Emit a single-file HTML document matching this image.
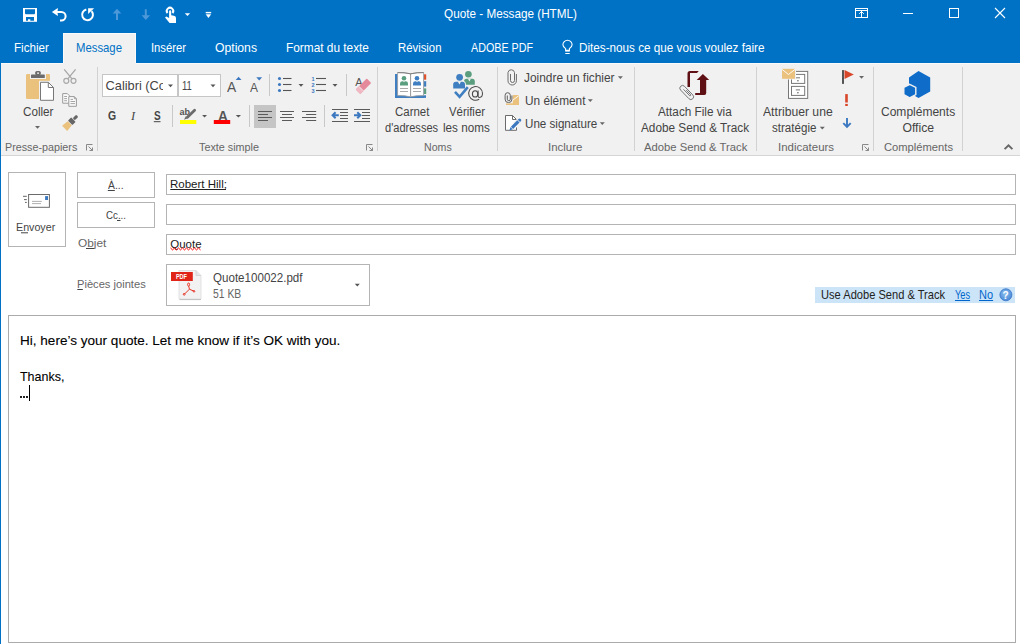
<!DOCTYPE html>
<html><head><meta charset="utf-8"><style>
html,body{margin:0;padding:0}
body{width:1020px;height:644px;position:relative;overflow:hidden;background:#fff;font-family:"Liberation Sans",sans-serif}
.t{position:absolute;white-space:nowrap;line-height:1;transform-origin:0 0}
</style></head><body>
<div style="position:absolute;left:0px;top:0px;width:1020px;height:63px;background:#0072c6"></div>
<div class="t" style="left:444.40px;top:8.14px;font-size:12.35px;color:#fff;transform:scaleX(0.9504);">Quote - Message (HTML)</div>
<div style="position:absolute;left:63px;top:33px;width:73px;height:31px;background:#f1f1f1;border:1px solid #fafafa;border-bottom:0;box-sizing:border-box"></div>
<div class="t" style="left:14.00px;top:41.97px;font-size:12.79px;color:#fff;transform:scaleX(0.9118);">Fichier</div>
<div class="t" style="left:76.00px;top:41.97px;font-size:12.79px;color:#0072c6;transform:scaleX(0.8862);">Message</div>
<div class="t" style="left:151.00px;top:41.97px;font-size:12.79px;color:#fff;transform:scaleX(0.8793);">Insérer</div>
<div class="t" style="left:215.00px;top:41.97px;font-size:12.79px;color:#fff;transform:scaleX(0.9529);">Options</div>
<div class="t" style="left:286.00px;top:41.97px;font-size:12.79px;color:#fff;transform:scaleX(0.9266);">Format du texte</div>
<div class="t" style="left:398.00px;top:41.97px;font-size:12.79px;color:#fff;transform:scaleX(0.8868);">Révision</div>
<div class="t" style="left:471.00px;top:41.97px;font-size:12.79px;color:#fff;transform:scaleX(0.8388);">ADOBE PDF</div>
<div class="t" style="left:579.40px;top:41.97px;font-size:12.79px;color:#fff;transform:scaleX(0.9160);">Dites-nous ce que vous voulez faire</div>
<div style="position:absolute;left:1px;top:63px;width:1019px;height:92px;background:#f1f1f1"></div>
<div style="position:absolute;left:1px;top:63px;width:62px;height:1px;background:#fafafa"></div>
<div style="position:absolute;left:136px;top:63px;width:884px;height:1px;background:#fafafa"></div>
<div style="position:absolute;left:1px;top:155px;width:1019px;height:1px;background:#d5d5d5"></div>
<div style="position:absolute;left:0px;top:63px;width:1px;height:581px;background:#0072c6"></div>
<div style="position:absolute;left:97px;top:67px;width:1px;height:84px;background:#d2d2d2"></div>
<div style="position:absolute;left:377px;top:67px;width:1px;height:84px;background:#d2d2d2"></div>
<div style="position:absolute;left:497px;top:67px;width:1px;height:84px;background:#d2d2d2"></div>
<div style="position:absolute;left:634px;top:67px;width:1px;height:84px;background:#d2d2d2"></div>
<div style="position:absolute;left:756px;top:67px;width:1px;height:84px;background:#d2d2d2"></div>
<div style="position:absolute;left:873px;top:67px;width:1px;height:84px;background:#d2d2d2"></div>
<div style="position:absolute;left:962px;top:67px;width:1px;height:84px;background:#d2d2d2"></div>
<div class="t" style="left:4.70px;top:141.26px;font-size:11.63px;color:#666666;transform:scaleX(0.9246);">Presse-papiers</div>
<div class="t" style="left:199.30px;top:141.26px;font-size:11.63px;color:#666666;transform:scaleX(0.9284);">Texte simple</div>
<div class="t" style="left:423.70px;top:141.26px;font-size:11.63px;color:#666666;transform:scaleX(0.9124);">Noms</div>
<div class="t" style="left:548.40px;top:141.26px;font-size:11.63px;color:#666666;transform:scaleX(0.9858);">Inclure</div>
<div class="t" style="left:644.00px;top:141.26px;font-size:11.63px;color:#666666;transform:scaleX(0.9684);">Adobe Send &amp; Track</div>
<div class="t" style="left:778.30px;top:141.26px;font-size:11.63px;color:#666666;transform:scaleX(0.9862);">Indicateurs</div>
<div class="t" style="left:883.60px;top:141.26px;font-size:11.63px;color:#666666;transform:scaleX(0.9619);">Compléments</div>
<div class="t" style="left:22.50px;top:106.26px;font-size:12.21px;color:#444444;transform:scaleX(0.9564);">Coller</div>
<div class="t" style="left:394.50px;top:106.06px;font-size:12.21px;color:#444444;transform:scaleX(0.9389);">Carnet</div>
<div class="t" style="left:384.60px;top:122.06px;font-size:12.21px;color:#444444;transform:scaleX(0.9051);">d'adresses</div>
<div class="t" style="left:449.00px;top:106.06px;font-size:12.21px;color:#444444;transform:scaleX(0.9307);">Vérifier</div>
<div class="t" style="left:443.00px;top:122.06px;font-size:12.21px;color:#444444;transform:scaleX(0.9580);">les noms</div>
<div class="t" style="left:658.00px;top:106.06px;font-size:12.21px;color:#444444;transform:scaleX(0.9624);">Attach File via</div>
<div class="t" style="left:641.00px;top:122.06px;font-size:12.21px;color:#444444;transform:scaleX(0.9660);">Adobe Send &amp; Track</div>
<div class="t" style="left:763.30px;top:106.06px;font-size:12.21px;color:#444444;transform:scaleX(0.9970);">Attribuer une</div>
<div class="t" style="left:772.00px;top:122.06px;font-size:12.21px;color:#444444;transform:scaleX(0.9483);">stratégie</div>
<div class="t" style="left:880.60px;top:106.06px;font-size:12.21px;color:#444444;transform:scaleX(0.9851);">Compléments</div>
<div class="t" style="left:902.40px;top:122.06px;font-size:12.21px;color:#444444;">Office</div>
<div class="t" style="left:524.20px;top:72.26px;font-size:12.21px;color:#444444;transform:scaleX(0.9745);">Joindre un fichier</div>
<div class="t" style="left:524.50px;top:95.46px;font-size:12.21px;color:#444444;transform:scaleX(0.9690);">Un élément</div>
<div class="t" style="left:524.50px;top:118.26px;font-size:12.21px;color:#444444;transform:scaleX(0.9511);">Une signature</div>
<div style="position:absolute;left:102px;top:74px;width:76px;height:23px;background:#fff;border:1px solid #c6c6c6;box-sizing:border-box"></div>
<div style="position:absolute;left:178px;top:74px;width:43px;height:23px;background:#fff;border:1px solid #c6c6c6;box-sizing:border-box"></div>
<div style="position:absolute;left:103px;top:75px;width:60px;height:21px;overflow:hidden">
<div class="t" style="left:2.60px;top:5.17px;font-size:12.79px;color:#444;">Calibri (Co</div>
</div>
<div class="t" style="left:181.90px;top:80.17px;font-size:12.79px;color:#444;transform:scaleX(0.7381);">11</div>
<div class="t" style="left:227.30px;top:78.96px;font-size:15.41px;color:#555;transform:scaleX(0.8953);">A</div>
<div class="t" style="left:250.20px;top:81.66px;font-size:12.21px;color:#555;transform:scaleX(0.9824);">A</div>
<div class="t" style="left:108.30px;top:110.22px;font-size:12.50px;color:#444;transform:scaleX(0.8329);font-weight:bold;">G</div>
<div class="t" style="left:153.80px;top:110.22px;font-size:12.50px;color:#444;transform:scaleX(0.8036);font-weight:bold;">S</div>
<div class="t" style="left:218.00px;top:108.72px;font-size:14.39px;color:#555;transform:scaleX(0.9481);font-weight:bold;">A</div>
<div style="position:absolute;left:8px;top:172px;width:58px;height:75px;border:1px solid #b4b4b4;box-sizing:border-box;background:#fff"></div>
<div style="position:absolute;left:77px;top:172px;width:78px;height:26px;border:1px solid #b4b4b4;box-sizing:border-box;background:#fff"></div>
<div style="position:absolute;left:77px;top:202px;width:78px;height:26px;border:1px solid #b4b4b4;box-sizing:border-box;background:#fff"></div>
<div style="position:absolute;left:166px;top:174px;width:850px;height:21px;border:1px solid #b4b4b4;box-sizing:border-box;background:#fff"></div>
<div style="position:absolute;left:166px;top:204px;width:850px;height:21px;border:1px solid #b4b4b4;box-sizing:border-box;background:#fff"></div>
<div style="position:absolute;left:166px;top:234px;width:850px;height:21px;border:1px solid #b4b4b4;box-sizing:border-box;background:#fff"></div>
<div class="t" style="left:15.60px;top:222.43px;font-size:11.19px;color:#444;transform:scaleX(0.9549);">Envoyer</div>
<div class="t" style="left:108.00px;top:180.03px;font-size:11.19px;color:#444;transform:scaleX(0.9233);">À...</div>
<div class="t" style="left:105.50px;top:210.03px;font-size:11.19px;color:#444;transform:scaleX(0.8692);">Cc...</div>
<div class="t" style="left:77.60px;top:238.45px;font-size:11.05px;color:#666;transform:scaleX(1.0719);">Objet</div>
<div class="t" style="left:170.30px;top:179.48px;font-size:11.48px;color:#1a1a1a;transform:scaleX(1.0036);">Robert Hill;</div>
<div class="t" style="left:170.30px;top:239.28px;font-size:11.48px;color:#1a1a1a;">Quote</div>
<div class="t" style="left:76.80px;top:279.45px;font-size:11.05px;color:#666;transform:scaleX(1.0080);">Pièces jointes</div>
<div style="position:absolute;left:166px;top:264px;width:204px;height:42px;border:1px solid #b4b4b4;box-sizing:border-box;background:#fff"></div>
<div class="t" style="left:213.40px;top:272.16px;font-size:12.21px;color:#444;transform:scaleX(0.9493);">Quote100022.pdf</div>
<div class="t" style="left:213.40px;top:288.36px;font-size:12.21px;color:#666;transform:scaleX(0.8509);">51 KB</div>
<div style="position:absolute;left:815px;top:287px;width:200px;height:16px;background:#cce4f7"></div>
<div class="t" style="left:821.40px;top:288.84px;font-size:12.35px;color:#222;transform:scaleX(0.8996);">Use Adobe Send &amp; Track</div>
<div class="t" style="left:954.70px;top:288.84px;font-size:12.35px;color:#0066cc;transform:scaleX(0.7494);text-decoration:underline;">Yes</div>
<div class="t" style="left:979.20px;top:288.84px;font-size:12.35px;color:#0066cc;transform:scaleX(0.8930);text-decoration:underline;">No</div>
<div style="position:absolute;left:8px;top:315px;width:1008px;height:328px;border:1px solid #ababab;box-sizing:border-box;background:#fff"></div>
<div class="t" style="left:19.90px;top:335.07px;font-size:12.79px;color:#000;transform:scaleX(1.0599);-webkit-text-stroke:0.1px #000;">Hi, here’s your quote. Let me know if it’s OK with you.</div>
<div class="t" style="left:19.90px;top:370.87px;font-size:12.79px;color:#000;transform:scaleX(0.9759);-webkit-text-stroke:0.1px #000;">Thanks,</div>
<div style="position:absolute;left:20.2px;top:396.2px;width:1.4px;height:1.5px;background:#222"></div>
<div style="position:absolute;left:23.3px;top:396.2px;width:1.4px;height:1.5px;background:#222"></div>
<div style="position:absolute;left:26.4px;top:396.2px;width:1.4px;height:1.5px;background:#222"></div>
<div style="position:absolute;left:29px;top:385px;width:1px;height:16px;background:#000"></div>
<svg style="position:absolute;left:0;top:0" width="1020" height="644" viewBox="0 0 1020 644"><rect x="23" y="8" width="14" height="13.8" fill="#ffffff"/><path d="M25,9.2 H35 V13.6 L34.3,14.3 H25.7 L25,13.6 Z" fill="#0072c6"/><path d="M26,17 H34 V20.8 H30.3 V19.3 H28 V20.8 H26 Z" fill="#0072c6"/><path d="M54,12 H61.3 A4.3,4.3 0 0 1 61.3,20.6 H60" fill="none" stroke="#ffffff" stroke-width="2"/><path d="M51.9,12 L57.8,7.9 V10.6 L55.6,12 L57.8,13.4 V16.1 Z" fill="#ffffff"/><path d="M86.3,9.5 A5.4,5.4 0 1 0 91.6,11.2" fill="none" stroke="#ffffff" stroke-width="2"/><path d="M88.1,8.2 H94.1 L88.1,14 Z" fill="#ffffff"/><path d="M117,8.8 L121.3,13.5 H118 V20 H116 V13.5 H112.7 Z" fill="#4c98d8"/><path d="M145.8,20 L150.1,15.3 H146.8 V9.3 H144.8 V15.3 H141.6 Z" fill="#4c98d8"/><path d="M167.55,13 A3.2,3.2 0 1 1 172.45,13" fill="none" stroke="#ffffff" stroke-width="2"/><path d="M169.1,18 V11.2 A1.05,1.05 0 0 1 171.2,11.2 V15.2 L174,15.7 Q176,16.1 176,18 V22.9 H169.6 L165,17.4 L166.3,16.5 Z" fill="#ffffff"/><path d="M184.8,13.2 H190.1 L187.45,16.1 Z" fill="#ffffff"/><rect x="205.7" y="11.9" width="5.5" height="1.4" fill="#ffffff"/><path d="M205.7,14.3 H211.2 L208.45,18 Z" fill="#ffffff"/><rect x="855.5" y="8.5" width="12" height="9" fill="none" stroke="#ffffff" stroke-width="1"/><path d="M855.5,10.5 H867.5" stroke="#ffffff" stroke-width="1"/><path d="M861.5,17.5 V11 M859.2,13.8 L861.5,11.5 L863.8,13.8" fill="none" stroke="#ffffff" stroke-width="1"/><path d="M903,13.5 H913" stroke="#ffffff" stroke-width="1"/><rect x="949.5" y="8.5" width="9" height="9" fill="none" stroke="#ffffff" stroke-width="1"/><path d="M995,8 L1005,18 M1005,8 L995,18" stroke="#ffffff" stroke-width="1.1"/><path d="M565.6,50.3 V48.6 Q562.9,46.6 562.9,44.8 A4.6,4.6 0 1 1 572.1,44.8 Q572.1,46.6 569.4,48.6 V50.3 Z" fill="none" stroke="#ffffff" stroke-width="1.1"/><rect x="565.2" y="50" width="4.6" height="1.6" fill="#ffffff"/><path d="M565.3,53.5 H569.7" stroke="#ffffff" stroke-width="1"/><rect x="26" y="74" width="24" height="25" rx="1.2" fill="#eac27d"/><rect x="30" y="73" width="16" height="6" fill="#f1f1f1"/><rect x="31" y="74.4" width="13.8" height="3.6" rx="0.6" fill="#6b6b6b"/><rect x="35.2" y="71" width="5.6" height="4" rx="1.6" fill="#6b6b6b"/><rect x="37.3" y="72.4" width="1.5" height="1.5" fill="#fff"/><rect x="39" y="80.8" width="16.5" height="21" fill="#f1f1f1"/><path d="M40.5,82.3 H48.3 L53.5,87.5 V100.3 H40.5 Z" fill="#fff" stroke="#777" stroke-width="1"/><path d="M48.3,82.3 V87.5 H53.5" fill="none" stroke="#777" stroke-width="1"/><circle cx="66.3" cy="80.8" r="2.5" fill="none" stroke="#a8a8a8" stroke-width="1.2"/><circle cx="73.5" cy="80.8" r="2.5" fill="none" stroke="#a8a8a8" stroke-width="1.2"/><path d="M64.2,69.3 L71.8,78.7 M75.6,69.3 L68,78.7" stroke="#a8a8a8" stroke-width="1.3"/><path d="M62.7,93.6 H67.3 L69.5,95.8 V103.2 H62.7 Z" fill="#fafafa" stroke="#9a9a9a" stroke-width="1"/><path d="M64.2,96.5 H67 M64.2,98.6 H67 M64.2,100.7 H67" stroke="#9a9a9a" stroke-width="0.9"/><path d="M68.8,96.6 H74.3 L76.4,98.7 V106.3 H68.8 Z" fill="#fafafa" stroke="#9a9a9a" stroke-width="1"/><path d="M74.3,96.6 V98.7 H76.4" fill="none" stroke="#9a9a9a" stroke-width="0.9"/><path d="M70.5,99.4 H73 M70.5,101.5 H75 M70.5,103.6 H75" stroke="#9a9a9a" stroke-width="0.9"/><g transform="translate(71,122) rotate(-45) scale(0.8)"><path d="M-11.2,-4.6 L-2.2,-3.6 V3.6 L-11.2,4.6 Z" fill="#eac27d"/><rect x="-1.4" y="-3.9" width="5.6" height="7.8" rx="0.6" fill="#666"/><rect x="4.8" y="-1.9" width="6.2" height="3.8" rx="1.4" fill="#666"/></g><path d="M35,126 H40 L37.5,128.8 Z" fill="#666"/><path d="M86.5,150.5 V144.5 H92.5" fill="none" stroke="#888" stroke-width="1"/><path d="M88.5,146.5 L92.5,150.5 M92.5,147.5 V150.5 H89.5" fill="none" stroke="#888" stroke-width="1"/><path d="M366.5,150.5 V144.5 H372.5" fill="none" stroke="#888" stroke-width="1"/><path d="M368.5,146.5 L372.5,150.5 M372.5,147.5 V150.5 H369.5" fill="none" stroke="#888" stroke-width="1"/><path d="M862.5,150.5 V144.5 H868.5" fill="none" stroke="#888" stroke-width="1"/><path d="M864.5,146.5 L868.5,150.5 M868.5,147.5 V150.5 H865.5" fill="none" stroke="#888" stroke-width="1"/><path d="M1004.6,149.2 L1008.5,145.3 L1012.4,149.2" fill="none" stroke="#666" stroke-width="1.9"/><path d="M168,84.5 H173 L170.5,87.3 Z" fill="#555"/><path d="M210.5,84.5 H215.5 L213,87.3 Z" fill="#555"/><path d="M235.7,80 H241.5 L238.6,76.8 Z" fill="#3b78c0"/><path d="M256.3,77.3 H262.1 L259.2,80.5 Z" fill="#3b78c0"/><path d="M269.5,74 V96 M346.5,74 V96 M172.5,105 V127 M249.5,105 V127 M324.5,105 V127" stroke="#c8c8c8" stroke-width="1"/><circle cx="279.5" cy="78.5" r="1.55" fill="#3b78c0"/><path d="M283,78.5 H291.5" stroke="#555" stroke-width="1.1"/><path d="M316,78.5 H326" stroke="#555" stroke-width="1.1"/><circle cx="279.5" cy="84.5" r="1.55" fill="#3b78c0"/><path d="M283,84.5 H291.5" stroke="#555" stroke-width="1.1"/><path d="M316,84.5 H326" stroke="#555" stroke-width="1.1"/><circle cx="279.5" cy="90.5" r="1.55" fill="#3b78c0"/><path d="M283,90.5 H291.5" stroke="#555" stroke-width="1.1"/><path d="M316,90.5 H326" stroke="#555" stroke-width="1.1"/><text x="311.5" y="80.8" font-size="5.5" font-weight="bold" fill="#3b78c0" font-family="Liberation Sans">1</text><text x="311.5" y="86.8" font-size="5.5" font-weight="bold" fill="#3b78c0" font-family="Liberation Sans">2</text><text x="311.5" y="92.8" font-size="5.5" font-weight="bold" fill="#3b78c0" font-family="Liberation Sans">3</text><path d="M298.5,84 H303.5 L301,86.8 Z" fill="#555"/><path d="M332.5,84 H337.5 L335,86.8 Z" fill="#555"/><text x="355.3" y="86.3" font-size="11" fill="#555" font-family="Liberation Sans">A</text><g transform="translate(363.5,86.3) rotate(-45)"><rect x="-7.8" y="-3.2" width="15.6" height="6.4" rx="0.8" fill="#e58a9a"/><rect x="-7.8" y="-3.2" width="4.5" height="6.4" fill="#f0b8c2"/><path d="M-3.3,-3.2 V3.2" stroke="#f1f1f1" stroke-width="0.9"/></g><rect x="254" y="105" width="22" height="23" fill="#c5c5c5"/><path d="M258,111.5 H272" stroke="#5a5a5a" stroke-width="1"/><path d="M258,114.5 H268" stroke="#5a5a5a" stroke-width="1"/><path d="M258,117.5 H272" stroke="#5a5a5a" stroke-width="1"/><path d="M258,120.5 H268" stroke="#5a5a5a" stroke-width="1"/><path d="M280,111.5 H294" stroke="#5a5a5a" stroke-width="1"/><path d="M282,114.5 H292" stroke="#5a5a5a" stroke-width="1"/><path d="M280,117.5 H294" stroke="#5a5a5a" stroke-width="1"/><path d="M282,120.5 H292" stroke="#5a5a5a" stroke-width="1"/><path d="M302,111.5 H316.2" stroke="#5a5a5a" stroke-width="1"/><path d="M306.1,114.5 H316.20000000000005" stroke="#5a5a5a" stroke-width="1"/><path d="M302,117.5 H316.2" stroke="#5a5a5a" stroke-width="1"/><path d="M306.1,120.5 H316.20000000000005" stroke="#5a5a5a" stroke-width="1"/><path d="M332,109.5 H348" stroke="#5a5a5a" stroke-width="1"/><path d="M340,112.5 H348" stroke="#5a5a5a" stroke-width="1"/><path d="M340,115.5 H348" stroke="#5a5a5a" stroke-width="1"/><path d="M340,118.5 H348" stroke="#5a5a5a" stroke-width="1"/><path d="M332,121.5 H348" stroke="#5a5a5a" stroke-width="1"/><path d="M338.8,115.2 H333.5 M335.6,112.2 L332.6,115.2 L335.6,118.2" fill="none" stroke="#3b78c0" stroke-width="2"/><path d="M354,109.5 H370" stroke="#5a5a5a" stroke-width="1"/><path d="M362,112.5 H370" stroke="#5a5a5a" stroke-width="1"/><path d="M362,115.5 H370" stroke="#5a5a5a" stroke-width="1"/><path d="M362,118.5 H370" stroke="#5a5a5a" stroke-width="1"/><path d="M354,121.5 H370" stroke="#5a5a5a" stroke-width="1"/><path d="M354,115.2 H359.5 M357.3,112.2 L360.3,115.2 L357.3,118.2" fill="none" stroke="#3b78c0" stroke-width="2"/><rect x="180" y="120" width="16.3" height="4" fill="#ffff00"/><text x="179.6" y="114.8" font-size="9" font-weight="bold" fill="#555" font-family="Liberation Sans">ab</text><path d="M186.2,116.6 L190,113 L194.6,109.8 L196.2,111.4 L192.5,115.5 L188.5,118.8 Z" fill="#f1f1f1"/><path d="M187.4,117.3 L194.6,110.3" stroke="#6b6b6b" stroke-width="2.8" stroke-linecap="round"/><path d="M184,119.7 L185.8,116.3 L187.7,118.2 Z" fill="#6b6b6b"/><text x="131" y="119.8" font-size="12.5" font-style="italic" fill="#444" font-family="Liberation Serif">I</text><path d="M153.8,121.7 H160.5" stroke="#444" stroke-width="1"/><rect x="213.8" y="120" width="16.4" height="4" fill="#ff0000"/><path d="M202.1,115.1 H207 L204.55,117.6 Z" fill="#555"/><path d="M235.8,115.1 H241 L238.4,117.6 Z" fill="#555"/><rect x="395" y="74" width="29" height="24" fill="#3f7fc1"/><rect x="395" y="95.3" width="31" height="2.6" fill="#3f7fc1"/><rect x="424" y="74.3" width="2.2" height="5.4" fill="#e0502a"/><rect x="424" y="81.2" width="2.2" height="5.4" fill="#3f7fc1"/><rect x="424" y="88.4" width="2.2" height="5.6" fill="#5a9e7f"/><path d="M397.6,72.6 Q404,72.3 410.6,73.8 Q417.2,72.3 423.6,72.6 V95.6 Q417.2,95.3 410.6,96.8 Q404,95.3 397.6,95.6 Z" fill="#fff" stroke="#9a9a9a" stroke-width="0.8"/><path d="M410.6,73.8 V96.6" stroke="#8a8a8a" stroke-width="0.9"/><path d="M397.6,72.6 Q404,72.3 410.6,73.8 Q417.2,72.3 423.6,72.6" fill="none" stroke="#777" stroke-width="0.9"/><circle cx="404" cy="78.3" r="2.3" fill="#5a9e7f"/><path d="M400,85.6 V83.4 Q400,81.2 402.4,81.2 H405.6 Q408,81.2 408,83.4 V85.6 Z" fill="#5a9e7f"/><path d="M403.1,81 H404.9 L404,82.3 Z" fill="#fff"/><circle cx="417" cy="78.3" r="2.3" fill="#3f7fc1"/><path d="M413,85.6 V83.4 Q413,81.2 415.4,81.2 H418.6 Q421,81.2 421,83.4 V85.6 Z" fill="#3f7fc1"/><path d="M416.1,81 H417.9 L417,82.3 Z" fill="#fff"/><path d="M400,88.5 H408 M400,91.5 H408 M413,88.5 H421 M413,91.5 H421" stroke="#a0a0a0" stroke-width="0.9"/><circle cx="468.4" cy="74.3" r="3.3" fill="#5a9e7f"/><path d="M464,84.8 V81.3 Q464,78.7 466.5,78.7 H472.3 Q474.8,78.7 474.8,81.3 V84.8 Z" fill="#5a9e7f"/><path d="M467.9,78.7 H470.9 L469.4,81.4 Z" fill="#f1f1f1"/><circle cx="459.6" cy="77.3" r="3.4" fill="#f1f1f1" stroke="#f1f1f1" stroke-width="2"/><path d="M453.2,88.5 V84.5 Q453.2,81.7 456,81.7 H462.2 Q465,81.7 465,84.5 V88.5 Z" fill="#f1f1f1" stroke="#f1f1f1" stroke-width="2"/><circle cx="459.6" cy="77.3" r="3.4" fill="#3f7fc1"/><path d="M453.2,88.5 V84.5 Q453.2,81.7 456,81.7 H462.2 Q465,81.7 465,84.5 V88.5 Z" fill="#3f7fc1"/><path d="M457.6,81.2 H461.2 L459.4,84.4 Z" fill="#f1f1f1"/><path d="M455,91.8 L459.6,96.8 L467.8,87.2" fill="none" stroke="#3f7fc1" stroke-width="2.6"/><g fill="none" stroke="#4a4a4a" stroke-width="1.05"><ellipse cx="475.1" cy="93.9" rx="2.7" ry="3.1"/><path d="M478.1,90.4 V95.9 Q478.1,97.4 479.6,97.4 Q482.5,97.4 482.5,93.3 A6.9,6.9 0 1 0 479.2,99.3"/></g><path d="M510.5,74 V80.5 A2,2 0 0 0 514.5,80.5 V72.5 A3.3,3.3 0 0 0 508,72.5 V80.8 A4.2,4.2 0 0 0 516.4,80.8 V74" fill="none" stroke="#6b6b6b" stroke-width="1"/><rect x="506" y="95" width="13" height="10" fill="#eac27d"/><path d="M507,104.5 L519,95.5" stroke="#fff" stroke-width="0.9"/><path d="M504.5,91.5 H512.8 V103.5 H504.5 Z" fill="#f1f1f1"/><rect x="506" y="103.6" width="13" height="1.4" fill="#eac27d"/><path d="M511.9,95.5 V99.2 A3.4,3.4 0 0 1 505.1,99.2 V95.3 A2.6,2.6 0 0 1 510.3,95.3 V99.2 A1.5,1.5 0 0 1 507.3,99.2 V95.5" fill="none" stroke="#5f5f5f" stroke-width="1"/><path d="M505.5,115.5 H512.5 L516.5,119.5 V130.3 H505.5 Z" fill="#fff" stroke="#6b6b6b" stroke-width="1"/><path d="M512.5,115.5 V119.5 H516.5" fill="none" stroke="#6b6b6b" stroke-width="1"/><g transform="translate(515.2,124.6) rotate(-45)"><rect x="-3" y="-2.7" width="11.8" height="5.4" fill="#f1f1f1"/><rect x="-3" y="-2.7" width="3" height="5.4" fill="#fff"/><path d="M-8.2,0 L-5.1,-1.6 V1.6 Z" fill="#3b78c0"/><rect x="-4.5" y="-1.6" width="9" height="3.2" fill="#3b78c0"/><path d="M5.2,-1.6 H6.3 A1.6,1.6 0 0 1 6.3,1.6 H5.2 Z" fill="#3b78c0"/></g><path d="M617.9,76.3 H622.9 L620.4,79.0 Z" fill="#666"/><path d="M587.8,99.3 H592.8 L590.3,102.0 Z" fill="#666"/><path d="M599.8,122.3 H604.8 L602.3,125.0 Z" fill="#666"/><path d="M687.5,86.9 V73.5 Q687.5,71 690,71 H698.8 L697,72.9 H690 V86.9 Z" fill="#5e1014"/><path d="M702.9,74 L709.2,79.9 H706.2 V93 Q706.2,94.9 704.3,94.9 H695.2 V93.1 H700 V79.9 H696.7 Z" fill="#5e1014"/><g transform="translate(686.7,92.5) rotate(46)"><rect x="-10" y="-4" width="20" height="8" rx="4" fill="#f1f1f1"/><rect x="-8.7" y="-2.7" width="17.4" height="5.4" rx="2.7" fill="none" stroke="#707070" stroke-width="0.9"/><path d="M-4.5,0.1 H4.5 A0.9,0.9 0 0 0 4.5,-1.3 H-2" fill="none" stroke="#707070" stroke-width="0.9"/></g><rect x="788.5" y="71.4" width="19.2" height="27" fill="#fff" stroke="#777" stroke-width="1"/><rect x="791.5" y="74.4" width="13.2" height="9" fill="none" stroke="#777" stroke-width="1"/><rect x="791.5" y="86.4" width="13.2" height="9" fill="none" stroke="#777" stroke-width="1"/><path d="M795.8,77.8 H800 M795.8,89.9 H800" stroke="#777" stroke-width="1"/><rect x="797.2" y="80" width="1.4" height="1.4" fill="#777"/><rect x="797.2" y="92" width="1.4" height="1.4" fill="#777"/><rect x="781.5" y="68" width="14.5" height="11.5" fill="#f1f1f1"/><rect x="782" y="68.8" width="13" height="10" fill="#eac27d"/><path d="M782,69.3 L788.5,74.5 L795,69.3" fill="none" stroke="#fff" stroke-width="0.9"/><path d="M819.8,126.8 H824.8 L822.3,129.5 Z" fill="#666"/><rect x="842" y="70.1" width="2" height="13.8" fill="#555"/><path d="M844.5,70.1 L853.8,74.6 L844.5,78.9 Z" fill="#d9472b"/><path d="M859.1,76.1 H864 L861.55,78.8 Z" fill="#666"/><rect x="845.2" y="94.1" width="2.6" height="8.4" fill="#d9472b"/><rect x="845.2" y="103.9" width="2.6" height="2.1" fill="#d9472b"/><path d="M847,118 V127 M843.3,123.2 L847,127 L850.7,123.2" fill="none" stroke="#3b78c0" stroke-width="1.9"/><path d="M918.5,71 L930.2,77.5 V91.5 L918.5,98 L909,92.6 V77.5 Z" fill="#0f6cc9"/><path d="M909.7,84.4 L915.8,87.5 V94.6 L909.7,97.8 L903.8,94.6 V87.5 Z" fill="#0f6cc9" stroke="#f1f1f1" stroke-width="1.4"/><rect x="28.6" y="194.5" width="20.8" height="12.8" fill="#fff" stroke="#6b6b6b" stroke-width="1"/><rect x="45.1" y="196.1" width="2.9" height="3.9" fill="#3b78c0"/><path d="M32,201.4 H41.8 M32,203.6 H41" stroke="#9a9a9a" stroke-width="0.8"/><path d="M23,196.3 H26.8 M24,199.6 H26.8 M25,202.4 H26.8" stroke="#666" stroke-width="1"/><path d="M21,232.8 H28 M107.8,190.5 H114.8 M117,220.5 H120.5 M86,248.5 H94 M77.3,289.5 H82.8" stroke="#444" stroke-width="1"/><path d="M170.3,189.5 H226" stroke="#222" stroke-width="1"/><path d="M170.5,248 L172.5,249.9 L174.5,248.0 L176.5,249.9 L178.5,248.0 L180.5,249.9 L182.5,248.0 L184.5,249.9 L186.5,248.0 L188.5,249.9 L190.5,248.0 L192.5,249.9 L194.5,248.0 L196.5,249.9 L198.5,248.0 L200.5,249.9" fill="none" stroke="#ff0000" stroke-width="1"/><path d="M179,270.5 H196 L201,275.5 V299 H179 Z" fill="#f2f2f2" stroke="#dcdcdc" stroke-width="0.8"/><path d="M179.5,299.6 H201" stroke="#b8b8b8" stroke-width="0.9"/><path d="M196,270.5 V275.5 H201" fill="#e6e6e6" stroke="#d0d0d0" stroke-width="0.8"/><rect x="171" y="272" width="21.8" height="9" fill="#e02418"/><text x="175.9" y="278.8" font-size="6.8" font-weight="bold" fill="#fff" font-family="Liberation Sans" textLength="11.1" lengthAdjust="spacingAndGlyphs">PDF</text><g fill="none" stroke="#e8281a" stroke-width="0.95"><ellipse cx="188.6" cy="284.5" rx="1" ry="1.5"/><path d="M188.7,286 L189.4,289.2 L184.8,293.8 M189.4,289.2 L193.6,291"/><circle cx="184.2" cy="294.3" r="0.9"/><circle cx="194" cy="291.3" r="0.8"/></g><path d="M354.8,283.8 H359.8 L357.3,286.5 Z" fill="#555"/><defs><radialGradient id="hg" cx="0.45" cy="0.4" r="0.6"><stop offset="0" stop-color="#8cc0f0"/><stop offset="1" stop-color="#4a88d6"/></radialGradient></defs><circle cx="1005.9" cy="294.8" r="6" fill="url(#hg)" stroke="#3f7ccc" stroke-width="0.9"/><text x="1002.6" y="298.8" font-size="10" font-weight="bold" fill="#fff" font-family="Liberation Sans">?</text></svg>
</body></html>
